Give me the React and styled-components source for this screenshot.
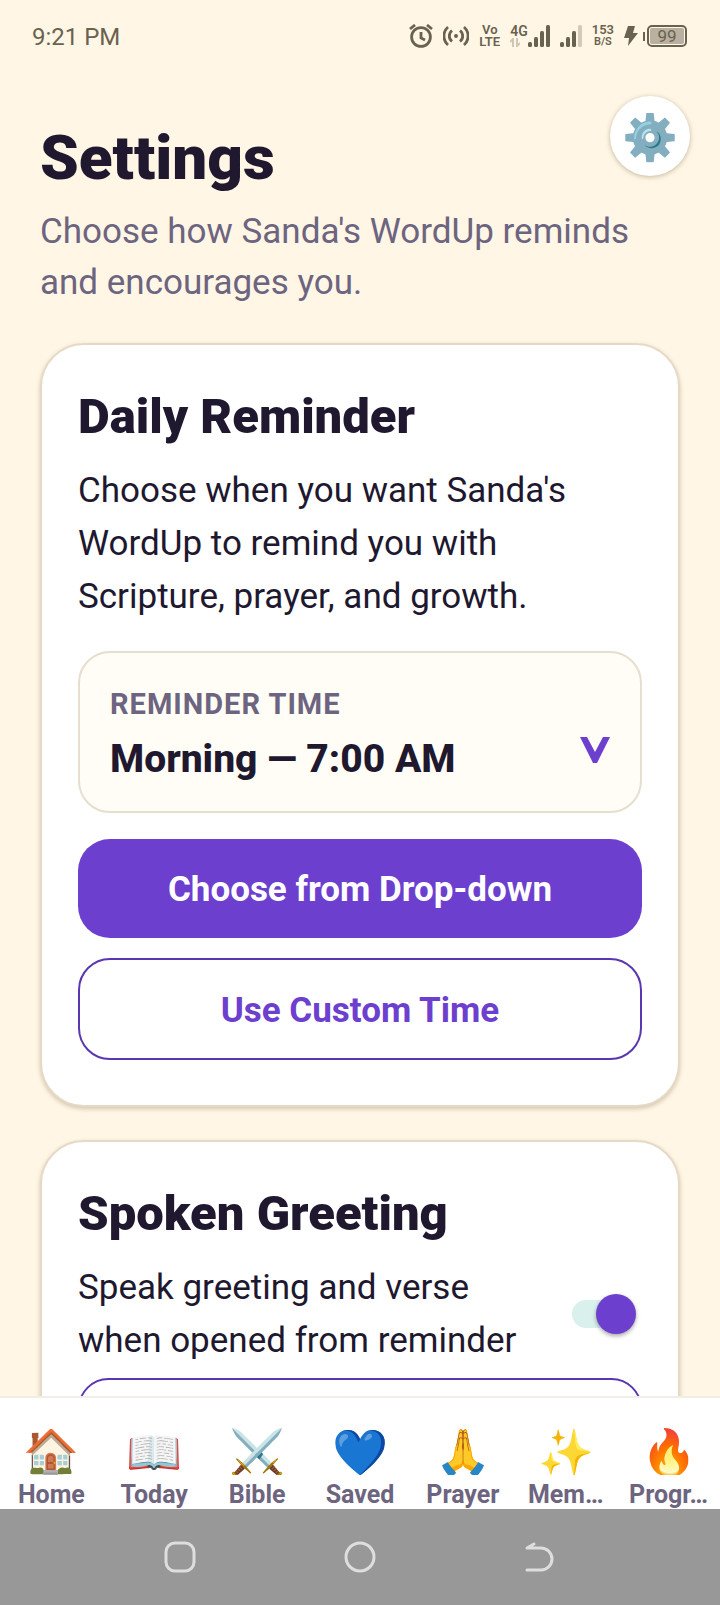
import React, { useState } from 'react';
import styled, { createGlobalStyle } from 'styled-components';

const GlobalStyle = createGlobalStyle`
  * {
    box-sizing: border-box;
  }

  body {
    margin: 0;
    background-color: #fff6e5;
    font-family: Roboto, sans-serif;
    color: #20182f;
  }

  h1, h2, p {
    margin: 0;
  }

  button, select, input {
    font-family: inherit;
    margin: 0;
  }
`;

const Screen = styled.div`
  height: 100vh;
  display: flex;
  flex-direction: column;
  overflow: hidden;
  background-color: #fff6e5;
`;

const StatusBar = styled.div`
  flex: none;
  display: flex;
  align-items: center;
  justify-content: space-between;
  height: 72px;
  padding: 0 33px 0 32px;
  color: #69624f;
`;

const Clock = styled.time`
  padding-top: 2px;
  font-size: 24px;
  line-height: 28px;
`;

const StatusIcons = styled.div`
  display: flex;
  align-items: center;
  gap: 10px;

  svg {
    display: block;
  }
`;

const StackedText = styled.span`
  display: flex;
  flex-direction: column;
  align-items: center;
  font-size: 13px;
  font-weight: 600;
  line-height: 12px;
`;

const SmallUnit = styled.span`
  font-size: 11px;
`;

const Content = styled.main`
  flex: 1;
  min-height: 0;
  overflow: hidden;
  padding: 0 40px;
`;

const Header = styled.header`
  display: flex;
  justify-content: space-between;
  align-items: flex-start;
  margin-right: -10px;
  padding-top: 24px;
`;

const Title = styled.h1`
  margin-top: 24px;
  font-size: 62px;
  line-height: 76px;
  font-weight: 900;
`;

const GearButton = styled.button`
  display: flex;
  align-items: center;
  justify-content: center;
  width: 80px;
  height: 80px;
  padding: 2px 0 0;
  border: 0;
  border-radius: 50%;
  background-color: #fff;
  box-shadow: 0 1px 5px rgba(80, 60, 20, 0.35);
  font-size: 45px;
`;

const Subtitle = styled.p`
  margin: 10px 0 35px;
  font-size: 35px;
  line-height: 51px;
  color: #6d6480;
`;

const Card = styled.section`
  padding: 44px 36px 45px;
  border: 2px solid #e6dac6;
  border-radius: 44px;
  background-color: #fff;
  box-shadow: 0 2px 4px rgba(80, 60, 20, 0.25);

  & + & {
    margin-top: 33px;
  }
`;

const CardTitle = styled.h2`
  font-size: 49px;
  line-height: 56px;
  font-weight: 900;
`;

const CardText = styled.p`
  margin-top: 19px;
  font-size: 35px;
  line-height: 53px;
`;

const TimeField = styled.label`
  display: flex;
  align-items: flex-end;
  justify-content: space-between;
  margin-top: 28px;
  padding: 32px 30px 28px;
  border: 2px solid #e6dfcf;
  border-radius: 32px;
  background-color: #fffdf5;

  svg {
    margin-bottom: 20px;
  }
`;

const TimeFieldBody = styled.span`
  flex: 1;
  display: flex;
  flex-direction: column;
  gap: 12px;
`;

const FieldLabel = styled.span`
  font-size: 29px;
  line-height: 38px;
  font-weight: 700;
  letter-spacing: 1px;
  color: #6d6480;
`;

const TimeSelect = styled.select`
  appearance: none;
  width: 100%;
  padding: 0;
  border: 0;
  background: transparent;
  font-size: 39px;
  line-height: 48px;
  font-weight: 800;
  color: inherit;
`;

const Button = styled.button`
  display: block;
  width: 100%;
  margin-top: ${({ $primary }) => ($primary ? '26px' : '20px')};
  padding: 30px 20px ${({ $primary }) => ($primary ? '28px' : '27px')};
  border: ${({ $primary }) => ($primary ? '0' : '2px solid #5a36b0')};
  border-radius: 32px;
  background-color: ${({ $primary }) => ($primary ? '#6d3fcf' : '#fff')};
  color: ${({ $primary }) => ($primary ? '#fff' : '#6d3fcf')};
  font-size: 35px;
  line-height: 41px;
  font-weight: 700;
`;

const ToggleRow = styled.label`
  display: flex;
  align-items: center;
  justify-content: space-between;
  margin-top: 19px;
  margin-bottom: -9px;
  font-size: 35px;
  line-height: 53px;

  span {
    max-width: 450px;
  }
`;

const Switch = styled.input`
  appearance: none;
  flex: none;
  position: relative;
  width: 60px;
  height: 28px;
  margin-right: 10px;
  border-radius: 14px;
  background-color: #d9f0ed;

  &::before {
    content: '';
    position: absolute;
    top: -6px;
    left: ${({ checked }) => (checked ? '24px' : '-4px')};
    width: 40px;
    height: 40px;
    border-radius: 50%;
    background-color: #6d3fcf;
    box-shadow: 0 2px 4px rgba(0, 0, 0, 0.35);
  }
`;

const TabBar = styled.nav`
  flex: none;
  display: grid;
  grid-template-columns: repeat(7, 1fr);
  padding-top: 28px;
  border-top: 2px solid #f2eee6;
  background-color: #fff;
`;

const Tab = styled.a`
  display: flex;
  flex-direction: column;
  align-items: center;
  gap: 5px;
  color: #6d6480;
  text-decoration: none;
  font-size: 25px;
  line-height: 29px;
  font-weight: 700;
`;

const TabIcon = styled.span`
  height: 49px;
  overflow: hidden;
  font-size: 45px;
  line-height: 54px;
`;

const SystemBar = styled.div`
  flex: none;
  display: flex;
  justify-content: space-around;
  align-items: center;
  height: 96px;
  padding: 0 90px;
  background-color: #989898;
`;

const SystemButton = styled.button`
  display: flex;
  padding: 0;
  border: 0;
  background: transparent;
`;

const tabs = [
  { label: 'Home', icon: '🏠' },
  { label: 'Today', icon: '📖' },
  { label: 'Bible', icon: '⚔️' },
  { label: 'Saved', icon: '💙' },
  { label: 'Prayer', icon: '🙏' },
  { label: 'Mem…', icon: '✨' },
  { label: 'Progr…', icon: '🔥' },
];

const AlarmIcon = () => (
  <svg width="24" height="24" viewBox="0 0 24 24" fill="none" stroke="#69624f" strokeWidth="2.8">
    <circle cx="12" cy="13" r="9.4" />
    <path d="M12 8v6l4 2M1 5l5-4M23 5l-5-4" />
  </svg>
);

const HotspotIcon = () => (
  <svg width="26" height="22" viewBox="0 0 26 22" fill="none" stroke="#69624f" strokeWidth="2.8">
    <circle cx="13" cy="11" r="2" fill="#69624f" stroke="none" />
    <path d="M9 5.500a7 7 0 0 0 0 11M17 5.500a7 7 0 0 1 0 11M5 2a12 12 0 0 0 0 18M21 2a12 12 0 0 1 0 18" />
  </svg>
);

const SignalIcon = ({ weak }) => (
  <svg width="22" height="22" viewBox="0 0 22 22" fill="#69624f">
    <rect x="0" y="17" width="4" height="5" rx="1.500" />
    <rect x="6" y="12" width="4" height="10" rx="1.500" />
    <rect x="12" y="6" width="4" height="16" rx="1.500" />
    <rect x="18" y="0" width="4" height="22" rx="1.500" fill={weak ? '#d3cab9' : '#69624f'} />
  </svg>
);

const DataArrowsIcon = () => (
  <svg width="10" height="9" viewBox="0 0 10 9" fill="none" stroke="#cfc6b4" strokeWidth="2">
    <path d="M0 4l3-3v8M10 5L7 8V0" />
  </svg>
);

const BoltIcon = () => (
  <svg width="14" height="20" viewBox="0 0 14 20" fill="#69624f">
    <path d="M4 0h7L9 7h5L4 20l1-8H0z" />
  </svg>
);

const Network = styled.span`
  display: flex;
  align-items: flex-end;
`;

const NetworkType = styled(StackedText)`
  align-items: flex-start;
  gap: 1px;
  font-size: 14px;
`;

const Battery = styled.span`
  display: flex;
  align-items: center;
  gap: 2px;

  &::before {
    content: '';
    width: 2px;
    height: 9px;
    background-color: #69624f;
  }
`;

const Power = styled.span`
  display: flex;
  align-items: center;
  gap: 5px;
`;

const BatteryBody = styled.span`
  padding: 1px;
  border: 2px solid #69624f;
  border-radius: 5px;

  span {
    display: block;
    width: 34px;
    border-radius: 2px;
    background-color: #b9b0a1;
    text-align: center;
    font-size: 17px;
    line-height: 16px;
  }
`;

const App = () => {
  const [spoken, setSpoken] = useState(true);

  return (
    <Screen>
      <GlobalStyle />
      <StatusBar>
        <Clock>9:21 PM</Clock>
        <StatusIcons>
          <AlarmIcon />
          <HotspotIcon />
          <StackedText>
            <span>Vo</span>
            <span>LTE</span>
          </StackedText>
          <Network>
            <NetworkType>
              <span>4G</span>
              <DataArrowsIcon />
            </NetworkType>
            <SignalIcon />
          </Network>
          <SignalIcon weak />
          <StackedText>
            <span>153</span>
            <SmallUnit>B/S</SmallUnit>
          </StackedText>
          <Power>
            <BoltIcon />
            <Battery>
              <BatteryBody>
                <span>99</span>
              </BatteryBody>
            </Battery>
          </Power>
        </StatusIcons>
      </StatusBar>

      <Content>
        <Header>
          <Title>Settings</Title>
          <GearButton aria-label="Open settings">⚙️</GearButton>
        </Header>
        <Subtitle>Choose how Sanda's WordUp reminds and encourages you.</Subtitle>

        <Card>
          <CardTitle>Daily Reminder</CardTitle>
          <CardText>
            Choose when you want Sanda's WordUp to remind you with Scripture, prayer, and growth.
          </CardText>
          <TimeField>
            <TimeFieldBody>
              <FieldLabel>REMINDER TIME</FieldLabel>
              <TimeSelect>
                <option>Morning — 7:00 AM</option>
              </TimeSelect>
            </TimeFieldBody>
            <svg width="30" height="26" viewBox="0 0 30 26" fill="#6d3fcf">
              <path d="M0 0h7l8 15 8-15h7L17 26h-4z" />
            </svg>
          </TimeField>
          <Button $primary>Choose from Drop-down</Button>
          <Button>Use Custom Time</Button>
        </Card>

        <Card>
          <CardTitle>Spoken Greeting</CardTitle>
          <ToggleRow>
            <span>Speak greeting and verse when opened from reminder</span>
            <Switch
              type="checkbox"
              checked={spoken}
              onChange={(e) => setSpoken(e.target.checked)}
            />
          </ToggleRow>
          <Button aria-label="Preview greeting" />
        </Card>
      </Content>

      <TabBar>
        {tabs.map(({ label, icon }) => (
          <Tab key={label} href="#">
            <TabIcon>{icon}</TabIcon>
            {label}
          </Tab>
        ))}
      </TabBar>

      <SystemBar>
        <SystemButton aria-label="Recent apps">
          <svg width="32" height="32" fill="none" stroke="#dedede" strokeWidth="3">
            <rect x="2" y="2" width="28" height="28" rx="9" />
          </svg>
        </SystemButton>
        <SystemButton aria-label="Home">
          <svg width="32" height="32" fill="none" stroke="#dedede" strokeWidth="3">
            <circle cx="16" cy="16" r="14" />
          </svg>
        </SystemButton>
        <SystemButton aria-label="Back">
          <svg
            width="32"
            height="32"
            fill="none"
            stroke="#dedede"
            strokeWidth="3"
            strokeLinecap="round"
            strokeLinejoin="round"
          >
            <path d="M10 3L3 7h14a11 11 0 0 1 0 22H3" />
          </svg>
        </SystemButton>
      </SystemBar>
    </Screen>
  );
};

export default App;
